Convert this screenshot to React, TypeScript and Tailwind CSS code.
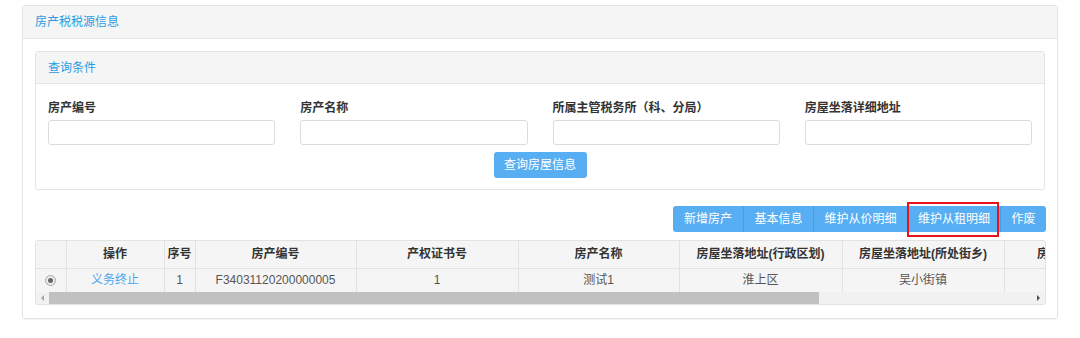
import React from 'react';

const font = { fontFamily: '"Liberation Sans", "Noto Sans CJK SC", sans-serif' };

const fields = ['房产编号', '房产名称', '所属主管税务所（科、分局）', '房屋坐落详细地址'];

const actions = [
  { label: '新增房产', w: 'w-[70px]' },
  { label: '基本信息', w: 'w-[70px]' },
  { label: '维护从价明细', w: 'w-[94px]' },
  { label: '维护从租明细', w: 'w-[93px]', marked: true },
  { label: '作废', w: 'w-[46px]' },
];

const columns = [
  { title: '', w: 'w-[30px]' },
  { title: '操作', w: 'w-[98px]' },
  { title: '序号', w: 'w-[31px]' },
  { title: '房产编号', w: 'w-[161px]' },
  { title: '产权证书号', w: 'w-[162px]' },
  { title: '房产名称', w: 'w-[161px]' },
  { title: '房屋坐落地址(行政区划)', w: 'w-[163px]' },
  { title: '房屋坐落地址(所处街乡)', w: 'w-[162px]' },
  { title: '房屋坐落详细地址', w: 'w-[162px]' },
];

const row = ['', '义务终止', '1', 'F34031120200000005', '1', '测试1', '淮上区', '吴小街镇', ''];

const App: React.FC = () => {
  return (
    <div className="w-[1080px] h-[338px] bg-white pt-[5px] pl-[22px] text-[12px] text-[#333]" style={font}>
      {/* 房产税税源信息 */}
      <div className="w-[1036px] border border-[#e3e3e3] rounded-[3px] shadow-[0_1px_1px_rgba(0,0,0,0.04)]">
        <div className="h-[33px] bg-[#f5f5f5] border-b border-[#e6e6e6] flex items-center px-[12px] text-[#2b9be3]">
          房产税税源信息
        </div>

        <div className="pt-[12px] pl-[12px] pr-[11px] pb-[13px]">
          {/* 查询条件 */}
          <div className="w-[1010px] border border-[#e3e3e3] rounded-[3px]">
            <div className="h-[32px] bg-[#f5f5f5] border-b border-[#e6e6e6] flex items-center px-[12px] text-[#2b9be3]">
              查询条件
            </div>
            <div className="pt-[16px] px-[12px] pb-[11px]">
              <div className="grid grid-cols-4 gap-x-[25px]">
                {fields.map((f) => (
                  <div key={f}>
                    <div className="h-[16px] leading-[16px] font-bold text-[#333]">{f}</div>
                    <input className="mt-[4px] w-full h-[25px] border border-[#dcdcdc] rounded-[3px] outline-none bg-white" />
                  </div>
                ))}
              </div>
              <div className="flex justify-center mt-[7px]">
                <button className="w-[93px] h-[26px] bg-[#58aef3] text-white rounded-[3px] text-[12px]">
                  查询房屋信息
                </button>
              </div>
            </div>
          </div>

          {/* toolbar */}
          <div className="flex justify-end mt-[16px]">
            <div className="flex h-[26px] bg-[#58aef3] rounded-[3px]">
              {actions.map((a, i) => (
                <div
                  key={a.label}
                  className={`relative ${a.w} flex items-center justify-center text-white ${i > 0 ? 'border-l border-[#4a9de0]' : ''}`}
                >
                  {a.label}
                  {a.marked && (
                    <div className="absolute left-[-1px] right-[1px] top-[-4px] bottom-[-5px] border-2 border-[#e8141b]" />
                  )}
                </div>
              ))}
            </div>
          </div>

          {/* table */}
          <div className="mt-[8px] w-[1011px] border border-[#e2e2e2] rounded-[3px] overflow-hidden">
            <table className="table-fixed border-collapse w-[1130px]">
              <thead>
                <tr className="h-[27px] bg-[#f5f5f5]">
                  {columns.map((c, i) => (
                    <th
                      key={i}
                      className={`${c.w} font-bold text-[#333] text-center whitespace-nowrap overflow-hidden border-r border-b border-[#e2e2e2] p-0`}
                    >
                      {c.title}
                    </th>
                  ))}
                </tr>
              </thead>
              <tbody>
                <tr className="h-[24px] bg-[#f5f5f5]">
                  {row.map((v, i) => (
                    <td key={i} className="text-center text-[#555] whitespace-nowrap border-r border-[#e2e2e2] p-0">
                      {i === 0 ? (
                        <span className="inline-flex items-center justify-center w-[11px] h-[11px] rounded-full border border-[#a8a8a8] bg-[#ececec] align-middle -mt-[2px]">
                          <span className="w-[5px] h-[5px] rounded-full bg-[#666]" />
                        </span>
                      ) : i === 1 ? (
                        <span className="text-[#4aa5ee]">{v}</span>
                      ) : (
                        v
                      )}
                    </td>
                  ))}
                </tr>
              </tbody>
            </table>
            {/* scrollbar */}
            <div className="h-[12px] bg-[#f1f1f1] flex items-center">
              <div className="w-[13px] flex justify-center">
                <span className="w-0 h-0 border-y-[3px] border-y-transparent border-r-[3px] border-r-[#a3a3a3]" />
              </div>
              <div className="w-[770px] h-[12px] bg-[#c1c1c1]" />
              <div className="flex-1" />
              <div className="w-[13px] flex justify-center">
                <span className="w-0 h-0 border-y-[3px] border-y-transparent border-l-[3px] border-l-[#505050]" />
              </div>
            </div>
          </div>
        </div>
      </div>
    </div>
  );
};

export default App;
